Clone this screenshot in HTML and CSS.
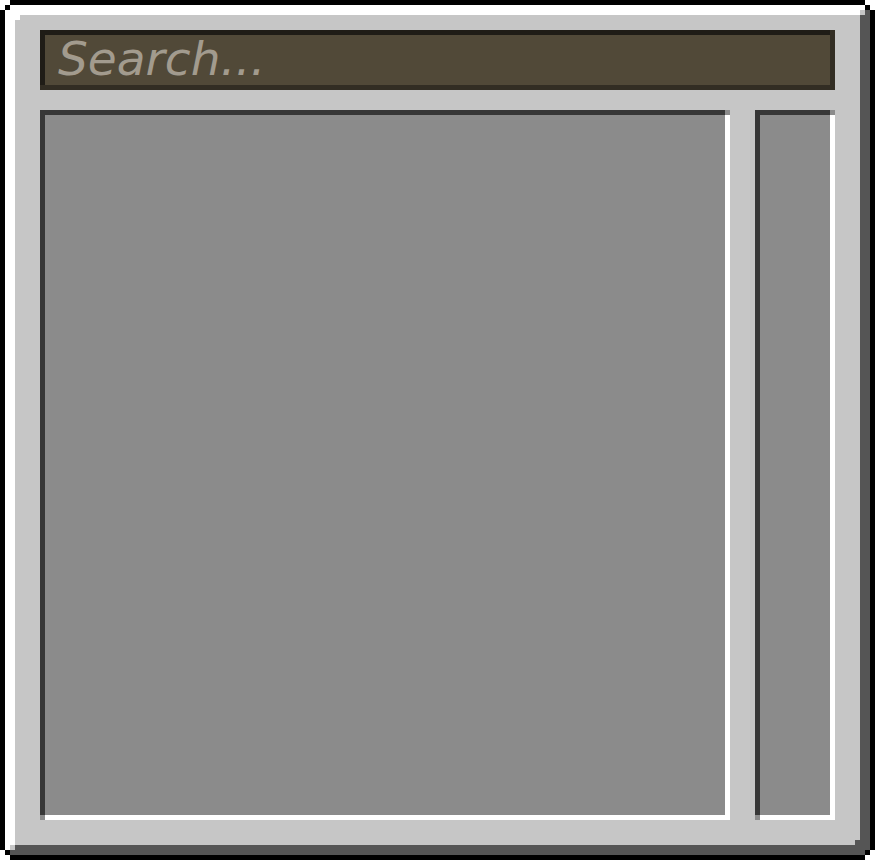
FILE: index.html
```html
<!DOCTYPE html>
<html lang="en">
<head>
<meta charset="utf-8">
<meta name="viewport" content="width=device-width, initial-scale=1">
<title>Inventory</title>
<link rel="stylesheet" href="styles.css">
</head>
<body>
<main class="window">
  <input class="search" type="text" placeholder="Search..." aria-label="Search">
  <div class="panels">
    <section class="slot"></section>
    <section class="slot"></section>
  </div>
</main>
</body>
</html>
```

FILE: styles.css
```css
:root {
  --px: 5px;
  --face: #c6c6c6;
  --shade: #555555;
  --slot: #8b8b8b;
  --slot-dark: #373737;
}

* {
  box-sizing: border-box;
}

body {
  margin: 0;
  background: #ffffff;
}

/* Bevelled frame: every layer is a solid strip, topmost first. */
.window {
  display: flex;
  flex-direction: column;
  gap: 20px;
  min-height: 100vh;
  padding: 30px 40px 40px;
  background:
    /* stepped outline corners */
    linear-gradient(#fff, #fff) left top / 10px 5px,
    linear-gradient(#fff, #fff) left top / 5px 10px,
    linear-gradient(#fff, #fff) right top / 10px 5px,
    linear-gradient(#fff, #fff) right top / 5px 10px,
    linear-gradient(#fff, #fff) left bottom / 10px 5px,
    linear-gradient(#fff, #fff) left bottom / 5px 10px,
    linear-gradient(#fff, #fff) right bottom / 10px 5px,
    linear-gradient(#fff, #fff) right bottom / 5px 10px,
    linear-gradient(#000, #000) left 5px top 5px / 5px 5px,
    linear-gradient(#000, #000) right 5px top 5px / 5px 5px,
    linear-gradient(#000, #000) left 5px bottom 5px / 5px 5px,
    linear-gradient(#000, #000) right 5px bottom 5px / 5px 5px,
    /* outline */
    linear-gradient(#000, #000) top / 100% 5px,
    linear-gradient(#000, #000) bottom / 100% 5px,
    linear-gradient(#000, #000) left / 5px 100%,
    linear-gradient(#000, #000) right / 5px 100%,
    /* inner corner steps */
    linear-gradient(#fff, #fff) left 15px top 15px / 5px 5px,
    linear-gradient(var(--shade), var(--shade)) right 15px bottom 15px / 5px 5px,
    linear-gradient(var(--face), var(--face)) right 10px top 10px / 5px 5px,
    linear-gradient(var(--face), var(--face)) left 10px bottom 10px / 5px 5px,
    linear-gradient(#fff, #fff) right 10px top 5px / 5px 5px,
    linear-gradient(#fff, #fff) left 5px bottom 10px / 5px 5px,
    /* bevel */
    linear-gradient(var(--shade), var(--shade)) right 5px top / 10px 100%,
    linear-gradient(var(--shade), var(--shade)) left bottom 5px / 100% 10px,
    linear-gradient(#fff, #fff) left top 5px / 100% 10px,
    linear-gradient(#fff, #fff) left 5px top / 10px 100%,
    var(--face);
  background-repeat: no-repeat;
}

.search {
  display: block;
  width: 100%;
  height: 60px;
  padding: 0 18px 4px;
  border: 0;
  border-radius: 0;
  outline: 0;
  background: #514938;
  box-shadow:
    inset -5px -5px 0 #322d23,
    inset 5px 5px 0 #1f1c16;
  color: #ffffff;
  font: italic 47px "DejaVu Sans", sans-serif;
}

.search::placeholder {
  color: #a29b8e;
  opacity: 1;
}

.panels {
  display: grid;
  flex: 1;
  grid-template-columns: 1fr 80px;
  gap: 25px;
}

.slot {
  background:
    linear-gradient(var(--slot), var(--slot)) right top / var(--px) var(--px),
    linear-gradient(var(--slot), var(--slot)) left bottom / var(--px) var(--px),
    linear-gradient(#fff, #fff) right / var(--px) 100%,
    linear-gradient(#fff, #fff) bottom / 100% var(--px),
    linear-gradient(var(--slot-dark), var(--slot-dark)) top / 100% var(--px),
    linear-gradient(var(--slot-dark), var(--slot-dark)) left / var(--px) 100%,
    var(--slot);
  background-repeat: no-repeat;
}
```
